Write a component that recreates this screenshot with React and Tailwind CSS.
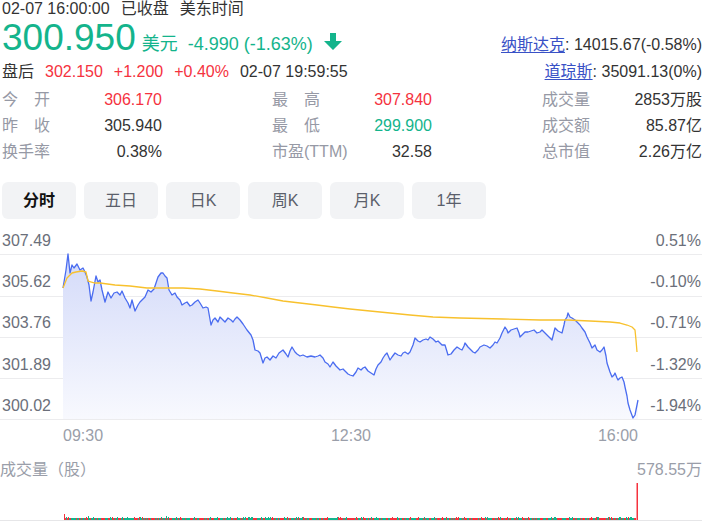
import React from "react";

const GREEN = "#14b48c";
const RED = "#f5323e";

const bluePts = [
  63, 288, 66, 270, 68, 254, 70, 273, 72, 265, 74, 268, 77, 264, 80, 270, 83, 268, 85, 272, 87, 277, 89, 285,
  91, 301, 93, 292, 96, 276, 98, 282, 100, 280, 102, 290, 105, 302, 108, 292, 111, 298, 114, 293, 117, 292,
  120, 295, 122, 291, 125, 298, 128, 303, 130, 308, 132, 300, 135, 311, 138, 305, 140, 302, 143, 299, 145, 297,
  148, 290, 151, 292, 154, 289, 156, 283, 158, 277, 161, 273, 163, 273, 165, 276, 167, 278, 169, 290, 172, 295,
  175, 293, 177, 297, 180, 300, 182, 305, 185, 303, 187, 302, 190, 306, 192, 305, 195, 302, 198, 300, 200, 303,
  203, 308, 206, 307, 208, 308, 211, 325, 213, 320, 215, 318, 218, 322, 220, 317, 223, 320, 225, 322, 228, 318,
  231, 320, 233, 322, 235, 319, 237, 317, 240, 320, 243, 324, 247, 330, 251, 335, 253, 340, 255, 350, 258, 351,
  260, 353, 263, 363, 265, 358, 267, 357, 270, 360, 273, 356, 276, 358, 279, 353, 283, 350, 286, 354, 288, 357,
  290, 351, 292, 347, 295, 352, 297, 354, 300, 356, 303, 355, 307, 357, 311, 356, 315, 357, 318, 356, 320, 355,
  323, 358, 325, 362, 328, 364, 330, 367, 333, 362, 336, 366, 338, 368, 340, 370, 343, 369, 345, 371, 348, 374,
  350, 375, 353, 376, 356, 372, 358, 368, 361, 370, 363, 368, 365, 367, 368, 371, 371, 373, 374, 375, 376, 369,
  378, 365, 381, 362, 383, 358, 385, 355, 387, 353, 390, 360, 392, 357, 395, 353, 398, 355, 401, 356, 403, 353,
  405, 352, 408, 354, 410, 352, 413, 345, 415, 338, 418, 341, 420, 342, 423, 340, 426, 339, 428, 340, 430, 337,
  433, 339, 436, 342, 438, 341, 440, 343, 442, 345, 445, 345, 448, 355, 451, 354, 454, 350, 457, 347, 460, 349,
  462, 350, 464, 346, 465, 343, 468, 347, 471, 350, 473, 352, 475, 353, 478, 350, 480, 347, 484, 345, 487, 346,
  490, 348, 493, 345, 495, 342, 497, 343, 500, 338, 502, 333, 505, 327, 507, 330, 508, 333, 511, 330, 514, 329,
  517, 328, 519, 333, 520, 337, 523, 334, 525, 332, 528, 332, 531, 331, 534, 330, 537, 333, 540, 332, 542, 330,
  545, 333, 548, 336, 552, 340, 555, 328, 558, 331, 560, 332, 562, 333, 564, 325, 565, 320, 567, 317, 568, 313,
  570, 317, 572, 318, 575, 320, 577, 322, 580, 325, 582, 328, 585, 332, 587, 337, 590, 343, 592, 348, 595, 345,
  597, 350, 600, 352, 602, 350, 604, 347, 606, 356, 607, 363, 610, 372, 612, 377, 614, 375, 615, 373, 617, 378,
  618, 380, 620, 378, 622, 377, 624, 382, 625, 387, 627, 396, 628, 403, 630, 410, 633, 418, 635, 415, 638, 400,
];

const avgPts = [
  63, 288, 65, 283, 67, 278, 70, 275, 72, 273, 76, 272, 82, 271, 86, 272, 88, 281, 95, 283, 100, 283, 115, 285,
  130, 286, 147, 288, 165, 288, 183, 288, 200, 289, 217, 291, 233, 293, 250, 295, 267, 298, 283, 301, 300, 303,
  317, 305, 333, 307, 350, 309, 370, 311, 390, 313, 410, 315, 433, 317, 460, 318, 503, 319, 540, 320, 567, 320,
  590, 321, 610, 322, 620, 323, 627, 325, 632, 327, 635, 330, 636, 340, 637, 352,
];

function toPath(pts) {
  let d = "";
  for (let i = 0; i < pts.length; i += 2) {
    d += (i === 0 ? "M" : "L") + pts[i] + " " + pts[i + 1] + " ";
  }
  return d;
}

const bluePath = toPath(bluePts);
const fillPath = bluePath + "L638 419 L63 419 Z";
const avgPath = toPath(avgPts);

// small deterministic noise for the volume bars
function makeBars() {
  let seed = 7;
  const rnd = () => {
    seed = (seed * 9301 + 49297) % 233280;
    return seed / 233280;
  };
  const bars = [];
  for (let x = 65; x < 636; x += 1) {
    const r = rnd();
    bars.push({ x, h: r < 0.12 ? 3 : 2, up: rnd() > 0.5 });
  }
  bars.push({ x: 64, h: 6, up: true });
  bars.push({ x: 88, h: 4, up: false });
  bars.push({ x: 166, h: 4, up: false });
  bars.push({ x: 630, h: 3, up: false });
  bars.push({ x: 636.5, h: 37, up: true });
  return bars;
}

const bars = makeBars();

const stats = [
  [["今", "开"], "306.170", "text-[#f5323e]", ["最", "高"], "307.840", "text-[#f5323e]", "成交量", "2853万股", "text-[#333]"],
  [["昨", "收"], "305.940", "text-[#333]", ["最", "低"], "299.900", "text-[#14b48c]", "成交额", "85.87亿", "text-[#333]"],
  ["换手率", "0.38%", "text-[#333]", "市盈(TTM)", "32.58", "text-[#333]", "总市值", "2.26万亿", "text-[#333]"],
];

function Label({ text }) {
  if (Array.isArray(text)) {
    return (
      <span className="flex w-[48px] justify-between text-[#9699a5]">
        <span>{text[0]}</span>
        <span>{text[1]}</span>
      </span>
    );
  }
  return <span className="text-[#9699a5]">{text}</span>;
}

const tabs = ["分时", "五日", "日K", "周K", "月K", "1年"];

const leftTicks = [
  ["307.49", 246, "0.51%"],
  ["305.62", 287, "-0.10%"],
  ["303.76", 328, "-0.71%"],
  ["301.89", 370, "-1.32%"],
  ["300.02", 411, "-1.94%"],
];

const App = () => {
  return (
    <div className="w-[702px] h-[528px] overflow-hidden bg-white font-['Liberation_Sans','Noto_Sans_CJK_SC',sans-serif] text-[16px] text-[#333]">
      {/* header */}
      <div className="flex justify-between pl-[2px]">
        <div className="flex flex-col">
          <div className="flex gap-[11px] h-[17px] leading-[17px] text-[#333]">
            <span>02-07 16:00:00</span>
            <span>已收盘</span>
            <span>美东时间</span>
          </div>
          <div className="flex items-baseline h-[41px] pt-[2px]">
            <span className="text-[37px] leading-[38px] text-[#14b48c]">300.950</span>
            <span className="ml-[6px] text-[18px] text-[#14b48c]">美元</span>
            <span className="ml-[10px] text-[18px] text-[#14b48c]">-4.990 (-1.63%)</span>
            <svg className="ml-[11px] self-center mt-[6px]" width="18" height="17" viewBox="0 0 18 17">
              <path d="M6 0 H12 V8 H18 L9 17 L0 8 H6 Z" fill="#14b48c" />
            </svg>
          </div>
          <div className="flex gap-[11px] h-[27px] items-center">
            <span className="text-[#333]">盘后</span>
            <span className="text-[#f5323e]">302.150</span>
            <span className="text-[#f5323e]">+1.200</span>
            <span className="text-[#f5323e]">+0.40%</span>
            <span className="text-[#333]">02-07 19:59:55</span>
          </div>
        </div>
        <div className="flex flex-col items-end pt-[35px]">
          <div className="h-[27px] leading-[20px]">
            <span className="text-[#3951c6] underline underline-offset-2">纳斯达克</span>
            <span>: 14015.67(-0.58%)</span>
          </div>
          <div className="h-[20px] leading-[20px]">
            <span className="text-[#3951c6] underline underline-offset-2">道琼斯</span>
            <span>: 35091.13(0%)</span>
          </div>
        </div>
      </div>

      {/* stats */}
      <div className="flex flex-col pl-[2px] mt-[2px]">
        {stats.map((row, i) => (
          <div key={i} className="grid grid-cols-[160px_160px_160px] gap-x-[110px] h-[26px] items-center">
            <div className="flex justify-between">
              <Label text={row[0]} />
              <span className={row[2]}>{row[1]}</span>
            </div>
            <div className="flex justify-between">
              <Label text={row[3]} />
              <span className={row[5]}>{row[4]}</span>
            </div>
            <div className="flex justify-between">
              <Label text={row[6]} />
              <span className={row[8]}>{row[7]}</span>
            </div>
          </div>
        ))}
      </div>

      {/* tabs */}
      <div className="flex gap-[8px] pl-[2px] mt-[17px]">
        {tabs.map((t, i) => (
          <div
            key={t}
            className={
              i === 0
                ? "w-[74px] h-[37px] rounded-[6px] bg-[#f2f3f5] flex items-center justify-center font-bold text-[#111]"
                : "w-[74px] h-[37px] rounded-[6px] bg-[#f2f3f5] flex items-center justify-center text-[#5b5f6b]"
            }
          >
            {t}
          </div>
        ))}
      </div>

      {/* price chart */}
      <svg className="mt-[6px] block" width="702" height="225" viewBox="0 225 702 225">
        <defs>
          <linearGradient id="fillGrad" x1="0" y1="254" x2="0" y2="419" gradientUnits="userSpaceOnUse">
            <stop offset="0" stopColor="#d3daf9" />
            <stop offset="1" stopColor="#f8f9fe" />
          </linearGradient>
        </defs>
        {[254, 296, 337, 378, 419].map((y) => (
          <line key={y} x1="0" x2="702" y1={y + 0.5} y2={y + 0.5} stroke="#ececee" strokeWidth="1" />
        ))}
        <path d={fillPath} fill="url(#fillGrad)" />
        <path d={bluePath} fill="none" stroke="#4a6cf0" strokeWidth="1.3" strokeLinejoin="round" />
        <path d={avgPath} fill="none" stroke="#f8c12d" strokeWidth="1.3" strokeLinejoin="round" />
        {leftTicks.map(([l, y, r]) => (
          <g key={l} fontFamily="Liberation Sans, Noto Sans CJK SC, sans-serif" fontSize="16" fill="#6b6f7a">
            <text x="2" y={y}>{l}</text>
            <text x="701" y={y} textAnchor="end">{r}</text>
          </g>
        ))}
        <g fontFamily="Liberation Sans, Noto Sans CJK SC, sans-serif" fontSize="16" fill="#9a9ea9">
          <text x="63" y="441">09:30</text>
          <text x="351" y="441" textAnchor="middle">12:30</text>
          <text x="638" y="441" textAnchor="end">16:00</text>
        </g>
      </svg>

      {/* volume */}
      <div className="flex justify-between items-end h-[30px] text-[#9a9ea9]">
        <span className="leading-[20px]">成交量（股）</span>
        <span className="leading-[20px]">578.55万</span>
      </div>
      <svg className="block" width="702" height="48" viewBox="0 480 702 48">
        {bars.map((b, i) => (
          <rect key={i} x={b.x} y={520 - b.h} width={b.h > 30 ? 1.5 : 1} height={b.h} fill={b.up ? RED : GREEN} />
        ))}
        <line x1="0" x2="702" y1="520.5" y2="520.5" stroke="#e6e6e8" strokeWidth="1" />
      </svg>
    </div>
  );
};

export default App;
